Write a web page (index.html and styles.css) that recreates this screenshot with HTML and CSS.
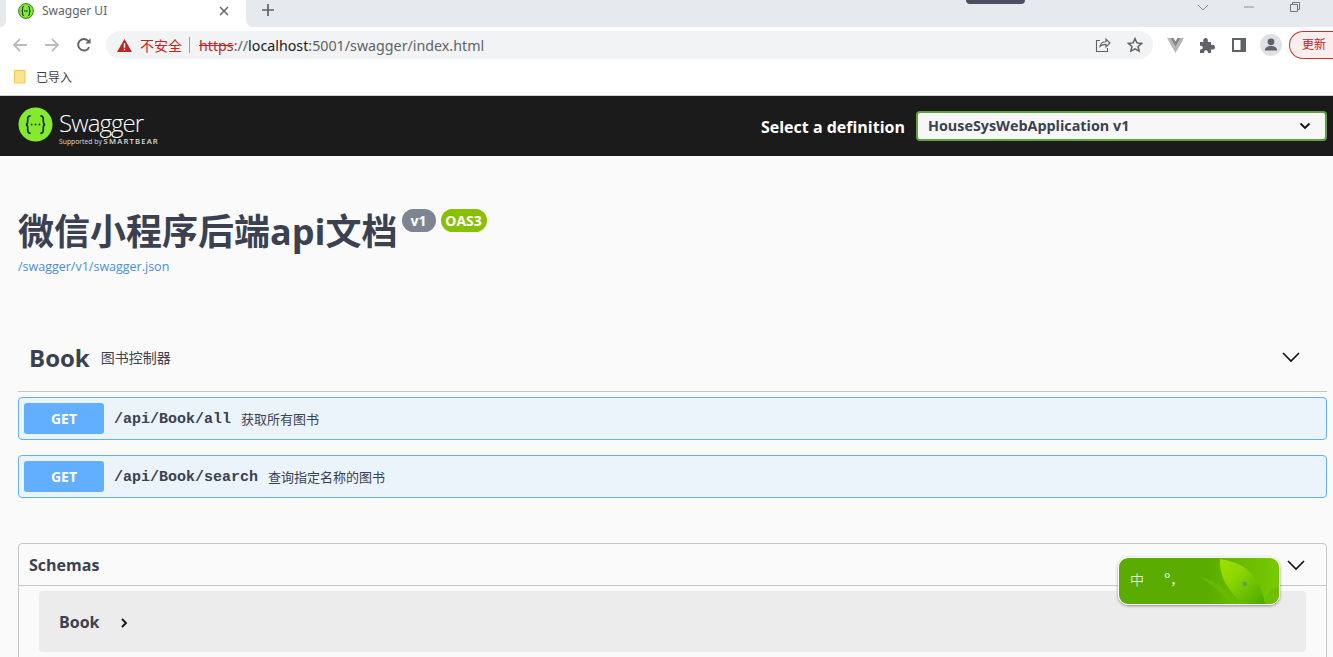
FILE: index.html
```html
<!DOCTYPE html>
<html lang="zh">
<head>
<meta charset="utf-8">
<title>Swagger UI</title>
<link rel="stylesheet" href="styles.css">
</head>
<body>
<div class="browser">
  <div class="tabstrip">
    <div class="strip-edge"></div>
    <div class="tab">
      <svg class="favicon" viewBox="0 0 16 16"><circle cx="8" cy="8" r="7.4" fill="#85ea2d" stroke="#2f7d1e"/><path d="M6 3.5c-1.6 0-1.4 1.2-1.4 2.6 0 1.2-.6 1.9-1.2 1.9.6 0 1.2.7 1.2 1.9 0 1.4-.2 2.6 1.4 2.6M10 3.5c1.6 0 1.4 1.2 1.4 2.6 0 1.2.6 1.9 1.2 1.9-.6 0-1.2.7-1.2 1.9 0 1.4.2 2.6-1.4 2.6M6 8h4" fill="none" stroke="#173647" stroke-width="1.1"/></svg>
      <span class="tab-title">Swagger UI</span>
      <svg class="tab-close" viewBox="0 0 10 10"><path d="M1 1l8 8M9 1l-8 8" stroke="#5f6368" stroke-width="1.5"/></svg>
    </div>
    <div class="strip-rest">
      <svg class="newtab" viewBox="0 0 14 14"><path d="M7 1v12M1 7h12" stroke="#5f6368" stroke-width="1.7"/></svg>
      <div class="win-controls">
        <svg class="win-chevron" viewBox="0 0 12 7"><path d="M1 1l5 5 5-5" fill="none" stroke="#8b8f94"/></svg>
        <svg class="win-min" viewBox="0 0 12 2"><path d="M1 1h10" stroke="#8b8f94"/></svg>
        <svg class="win-restore" viewBox="0 0 10 10"><path d="M.5 2.5h7v7h-7zM2.5 2.5v-2h7v7h-2" fill="none" stroke="#74787d"/></svg>
      </div>
    </div>
  </div>
  <div class="toolbar">
    <svg class="nav-icon" viewBox="0 0 16 16"><path d="M15 8H2M8 2L2 8l6 6" fill="none" stroke="#b9bbbe" stroke-width="1.8"/></svg>
    <svg class="nav-icon" viewBox="0 0 16 16"><path d="M1 8h13M8 2l6 6-6 6" fill="none" stroke="#b9bbbe" stroke-width="1.8"/></svg>
    <svg class="nav-icon" viewBox="0 0 16 16"><path d="M13.2 10.2A5.8 5.8 0 1 1 12.4 4" fill="none" stroke="#5f6368" stroke-width="1.9"/><path d="M14.6 1.2v5.3H9.3z" fill="#5f6368"/></svg>
    <div class="omnibox">
      <svg class="warn" viewBox="0 0 16 14"><path d="M8 0l8 14H0z" fill="#c5221f"/><path d="M7.2 4.5h1.6v5H7.2zM7.2 10.6h1.6v1.6H7.2z" fill="#fff"/></svg>
      <span class="insecure">不安全</span>
      <span class="omni-sep"></span>
      <span class="url"><s class="scheme">https</s><span class="url-dim">://</span><span class="url-host">localhost</span><span class="url-dim">:5001/swagger/index.html</span></span>
      <svg class="omni-icon" viewBox="0 0 16 16"><path d="M5.5 10.5c.5-3 3-4.8 6-4.8V3l4 4-4 4V8.4c-2.5 0-4.6.5-6 2.1z" fill="none" stroke="#5f6368" stroke-width="1.1" transform="translate(-.5 -1)"/><path d="M5 3.5H1.5v11h11V11" fill="none" stroke="#5f6368" stroke-width="1.1"/></svg>
      <svg class="omni-icon star" viewBox="0 0 16 16"><path d="M8 1.6l1.9 4.3 4.7.5-3.5 3.1 1 4.6L8 11.8l-4.1 2.3 1-4.6-3.5-3.1 4.7-.5z" fill="none" stroke="#5f6368" stroke-width="1.5"/></svg>
    </div>
    <svg class="ext-vue" viewBox="0 0 17 15"><path d="M0 0h3.400L8.500 8.800 13.600 0H17L8.500 15z" fill="#b4b6b8"/><path d="M3.400 0h3.100l2 3.400 2-3.400h3.100L8.500 8.800z" fill="#85888b"/></svg>
    <svg class="ext-puzzle" viewBox="0 0 16 16"><path d="M1 5h3.400c-.6-2.600.6-4 2.200-4s2.800 1.400 2.200 4H12v3c2.600-.6 4 .6 4 2.200s-1.400 2.800-4 2.200V16H8.800c.4-2-.6-2.800-1.800-2.800s-2.200.8-1.800 2.800H1v-3.600c2 .4 2.800-.6 2.800-1.800S3 8.400 1 8.800z" fill="#5f6368"/></svg>
    <svg class="ext-panel" viewBox="0 0 14 14"><path d="M0 0h14v14H0z" fill="#5f6368"/><path d="M2 2h6.500v10H2z" fill="#fff"/></svg>
    <span class="avatar"><svg viewBox="0 0 22 22"><circle cx="11" cy="7.800" r="3.400" fill="#5f6368"/><path d="M4.800 16.500c0-3 3.200-4.400 6.200-4.400s6.200 1.400 6.200 4.400z" fill="#5f6368"/></svg></span>
    <span class="update">更新</span>
  </div>
  <div class="bookmarks">
    <svg class="folder" viewBox="0 0 12 14"><path d="M.5.500h10.500v12.500H.5z" fill="#fde293" stroke="#f2c94c"/></svg>
    <span class="bm-label">已导入</span>
  </div>
</div>

<header class="topbar">
  <div class="logo">
    <svg class="logo-mark" viewBox="0 0 36 36"><circle cx="18" cy="18" r="17.500" fill="#85ea2d"/><path d="M13 9c-3.400 0-3 2.600-3 5.500 0 2.200-.8 3.500-2 3.500 1.200 0 2 1.300 2 3.500 0 2.900-.4 5.500 3 5.500M23 9c3.400 0 3 2.600 3 5.500 0 2.200.8 3.500 2 3.500-1.200 0-2 1.300-2 3.500 0 2.900.4 5.500-3 5.500" fill="none" stroke="#173647" stroke-width="1.800"/><circle cx="14" cy="18" r="1" fill="#173647"/><circle cx="18" cy="18" r="1" fill="#173647"/><circle cx="22" cy="18" r="1" fill="#173647"/></svg>
    <div class="logo-text">
      <span class="logo-name">Swagger</span>
      <span class="logo-sub"><span class="logo-by">Supported by</span> <b class="logo-bear">SMARTBEAR</b></span>
    </div>
  </div>
  <div class="definition">
    <label class="def-label">Select a definition</label>
    <div class="def-select">
      <span>HouseSysWebApplication v1</span>
      <svg viewBox="0 0 12 8"><path d="M1.500 1.500L6 6l4.500-4.500" fill="none" stroke="#111" stroke-width="1.800"/></svg>
    </div>
  </div>
</header>

<main class="content">
  <section class="info">
    <div class="title-row">
      <h1 class="title">微信小程序后端api文档</h1>
      <span class="badge badge-ver">v1</span>
      <span class="badge badge-oas">OAS3</span>
    </div>
    <a class="spec-link">/swagger/v1/swagger.json</a>
  </section>

  <section class="tag">
    <div class="tag-head">
      <span class="tag-name">Book</span>
      <span class="tag-desc">图书控制器</span>
      <svg class="tag-chev" viewBox="0 0 20 20"><path d="M2 6l8 8 8-8" fill="none" stroke="#111" stroke-width="1.600"/></svg>
    </div>
    <div class="op">
      <span class="op-method">GET</span>
      <span class="op-path">/api/Book/all</span>
      <span class="op-desc">获取所有图书</span>
    </div>
    <div class="op">
      <span class="op-method">GET</span>
      <span class="op-path">/api/Book/search</span>
      <span class="op-desc">查询指定名称的图书</span>
    </div>
  </section>

  <section class="schemas">
    <div class="schemas-head">
      <span class="schemas-title">Schemas</span>
      <svg class="tag-chev" viewBox="0 0 20 20"><path d="M2 6l8 8 8-8" fill="none" stroke="#111" stroke-width="1.600"/></svg>
    </div>
    <div class="model">
      <span class="model-name">Book</span>
      <svg class="model-arrow" viewBox="0 0 8 12"><path d="M2 2l4 4-4 4" fill="none" stroke="#111" stroke-width="1.800"/></svg>
    </div>
  </section>
</main>

<div class="os-tip"></div>
<div class="ime">
  <svg class="ime-bg" viewBox="0 0 160 46" preserveAspectRatio="none">
    <defs>
      <linearGradient id="imeg" x1="0" y1="0" x2="1" y2="0"><stop offset="0" stop-color="#5aad00"/><stop offset=".55" stop-color="#5aad00"/><stop offset="1" stop-color="#78ca00"/></linearGradient>
      <linearGradient id="leaf" x1="0" y1="0" x2="1" y2="1"><stop offset="0" stop-color="#a0e000"/><stop offset=".35" stop-color="#8ed600"/><stop offset="1" stop-color="#4aa800"/></linearGradient>
    </defs>
    <rect width="160" height="46" fill="url(#imeg)"/>
    <path d="M80 19c16 3 30 13 38 27h-7C103 35 93 26 80 19z" fill="#68ba00"/>
    <path d="M101 1C125 5 140 15 146 46H124C108 32 100 18 101 1z" fill="url(#leaf)"/>
    <path d="M160 29c-9 2-15 9-14 17h14z" fill="#6cc000"/>
    <circle cx="126" cy="26" r="3" fill="#5fa92c" stroke="#8fc95e" stroke-width=".6"/>
  </svg>
  <span class="ime-zh">中</span>
  <span class="ime-punct">°,</span>
</div>
</body>
</html>
```
FILE: styles.css
```css
* { box-sizing: border-box; }
html, body { margin: 0; padding: 0; }
body {
  width: 1333px;
  height: 657px;
  overflow: hidden;
  background: #fafafa;
  font-family: "Open Sans", "Noto Sans CJK SC", sans-serif;
  position: relative;
}

/* browser chrome */
.browser { background: #fff; border-bottom: 1px solid #d0d0d0; height: 96px; font-family: "Noto Sans", "Noto Sans CJK SC", sans-serif; }
.tabstrip { height: 27px; display: flex; align-items: stretch; }
.strip-edge { width: 6px; background: #e6e9ed; border-radius: 0 0 7px 0; flex: none; }
.tab { width: 240px; flex: none; display: flex; align-items: center; padding: 0 17px 6px 12px; }
.strip-rest { flex: 1; background: #e6e9ed; border-radius: 0 0 0 7px; display: flex; align-items: flex-start; }
.favicon { width: 16px; height: 16px; flex: none; }
.tab-title { font-size: 12px; color: #5f6368; margin-left: 8px; flex: 1; }
.tab-close { width: 10px; height: 10px; }
.newtab { width: 14px; height: 14px; margin: 3px 0 0 15px; }
.win-controls { margin-left: auto; display: flex; align-items: center; padding-right: 33px; height: 14px; }
.win-chevron { width: 12px; height: 7px; }
.win-min { width: 12px; height: 2px; margin-left: 34px; }
.win-restore { width: 10px; height: 10px; margin-left: 35px; }

.toolbar { height: 37px; display: flex; align-items: center; padding: 0 0 1px 12px; }
.nav-icon { width: 16px; height: 16px; margin-right: 16px; flex: none; }
.omnibox {
  width: 1047px; height: 28px; margin-left: -2px; background: #f1f3f4; border-radius: 14px;
  display: flex; align-items: center; padding: 0 10px 0 11px; flex: none;
}
.warn { width: 15px; height: 13px; flex: none; }
.insecure { font-size: 14px; color: #c5221f; margin-left: 8px; }
.omni-sep { width: 1px; height: 16px; background: #9aa0a6; margin: 0 9px 0 7px; }
.url { font-size: 14.250px; flex: 1; white-space: nowrap; }
.scheme { color: #c5221f; }
.url-dim { color: #5f6368; }
.url-host { color: #202124; }
.omni-icon { width: 16px; height: 16px; flex: none; }
.star { margin-left: 16px; }
.ext-vue { width: 17px; height: 15px; margin-left: 14px; flex: none; }
.ext-puzzle { width: 16px; height: 16px; margin-left: 15px; flex: none; }
.ext-panel { width: 14px; height: 14px; margin-left: 17px; flex: none; }
.avatar { width: 22px; height: 22px; border-radius: 50%; background: #dee1e6; margin-left: 14px; flex: none; display: flex; }
.update {
  flex: none; width: 60px; height: 28px; margin-left: 7px; border: 1px solid #d0302b; border-right: 0;
  border-radius: 14px 0 0 14px; background: #fbeeee; color: #c5221f; font-size: 12px; line-height: 26px; padding-left: 12px;
}
.bookmarks { height: 31px; display: flex; align-items: center; padding: 0 0 5px 14px; }
.folder { width: 12px; height: 14px; flex: none; }
.bm-label { font-size: 12px; color: #3c4043; margin-left: 10px; }

/* swagger top bar */
.topbar { height: 60px; background: #1b1b1b; display: flex; align-items: center; padding: 0 6px 0 18px; justify-content: space-between; }
.logo { display: flex; align-items: center; padding-bottom: 4px; }
.logo-mark { width: 35px; height: 35px; flex: none; }
.logo-text { display: flex; flex-direction: column; margin: 10px 0 0 6px; color: #fff; }
.logo-name { font-size: 24px; line-height: 27px; font-weight: 300; letter-spacing: -.9px; margin-top: -2px; }
.logo-sub { font-size: 6.800px; line-height: 10px; white-space: nowrap; color: #ddd; }
.logo-bear { font-size: 7.700px; letter-spacing: 1.150px; font-weight: 600; }
.definition { display: flex; align-items: center; }
.def-label { font-size: 16px; font-weight: 700; color: #fff; margin-right: 11px; padding-top: 1px; }
.def-select {
  width: 411px; height: 30px; border: 2px solid #62a03f; border-radius: 4px; background: #f7f7f7;
  display: flex; align-items: center; justify-content: space-between; padding: 0 14px 1px 10px;
  font-size: 14.350px; font-weight: 700; color: #3b4151;
}
.def-select svg { width: 12px; height: 8px; }

/* page */
.content { padding: 0 6px 0 18px; }
.info { padding-top: 50px; }
.title-row { display: flex; align-items: flex-start; height: 51px; }
.title { margin: 0; font-size: 36px; line-height: 51px; font-weight: 700; color: #3b4151; font-family: "Open Sans", "Noto Sans CJK SC", sans-serif; white-space: nowrap; }
.badge { height: 23px; border-radius: 12px; color: #fff; font-size: 14px; font-weight: 700; line-height: 23px; padding: 0 6px; margin-top: 3px; }
.badge-ver { background: #7d8492; width: 34px; margin-left: 4px; text-align: center; }
.badge-oas { background: #89bf04; width: 46px; margin-left: 5px; text-align: center; padding: 0; }
.spec-link { display: block; font-size: 12.500px; line-height: 16px; color: #4990e2; margin-top: 2px; }

.tag { margin-top: 59px; }
.tag-head { height: 58px; display: flex; align-items: center; padding: 0 26px 11px 11px; border-bottom: 1px solid #c6c6c6; }
.tag-name { font-size: 24px; font-weight: 700; color: #3b4151; }
.tag-desc { font-size: 14px; color: #3b4151; margin-left: 11px; flex: 1; }
.tag-chev { width: 20px; height: 20px; flex: none; }
.op {
  height: 43px; margin-top: 5px; display: flex; align-items: center; padding: 0 5px;
  background: #ebf3fb; border: 1px solid #61affe; border-radius: 4px;
}
.op + .op { margin-top: 15px; }
.op-method {
  width: 80px; height: 31px; background: #61affe; border-radius: 3px; color: #fff;
  font-size: 14px; font-weight: 700; line-height: 31px; text-align: center; flex: none;
}
.op-path { font-family: "Liberation Mono", "DejaVu Sans Mono", monospace; font-size: 15px; line-height: 20px; color: #3b4151; font-weight: 600; margin: 2px 0 0 10px; }
.op-desc { font-size: 13px; color: #3b4151; margin-left: 10px; }

.schemas { margin-top: 45px; height: 130px; border: 1px solid #c6c6c6; border-radius: 4px; }
.schemas-head { height: 42px; display: flex; align-items: center; justify-content: space-between; padding: 0 20px 0 10px; border-bottom: 1px solid #c6c6c6; }
.schemas-title { font-size: 16px; font-weight: 700; color: #3b4151; }
.model { margin: 5px 20px 0; height: 61px; background: #ececec; border-radius: 4px; display: flex; align-items: center; padding-left: 20px; }
.model-name { font-size: 16px; font-weight: 700; color: #3b4151; }
.model-arrow { width: 8px; height: 12px; margin-left: 21px; margin-top: 3px; }

/* things floating over the page */
.os-tip { position: absolute; left: 966px; top: 0; width: 59px; height: 4px; background: #4a5060; border-radius: 0 0 4px 4px; }
.ime {
  position: absolute; left: 1118px; top: 557px; width: 162px; height: 48px; overflow: hidden;
  border: 1px solid #fff; border-radius: 10px; box-shadow: 0 1px 3px rgba(0,0,0,.4); color: #fff;
}
.ime-bg { position: absolute; inset: 0; width: 100%; height: 100%; }
.ime-zh { position: absolute; left: 11px; top: 11px; font-size: 14px; line-height: 20px; font-family: "Noto Sans CJK SC", sans-serif; font-weight: 300; }
.ime-punct { position: absolute; left: 45px; top: 11px; font-size: 16px; line-height: 20px; letter-spacing: 1px; font-family: "Liberation Serif", serif; }
```
